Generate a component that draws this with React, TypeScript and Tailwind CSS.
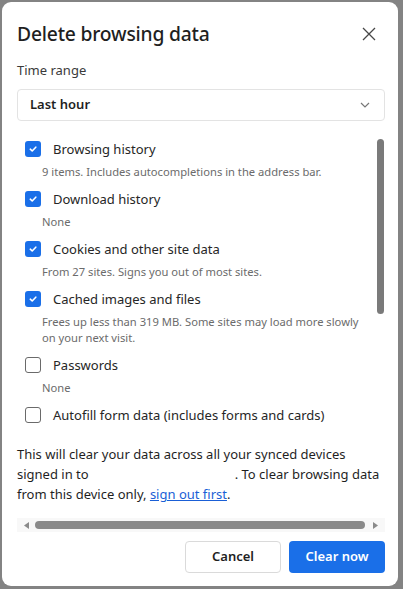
import React from 'react';

type Item = { label: string; desc: string[]; checked: boolean };

const items: Item[] = [
  { label: 'Browsing history', desc: ['9 items. Includes autocompletions in the address bar.'], checked: true },
  { label: 'Download history', desc: ['None'], checked: true },
  { label: 'Cookies and other site data', desc: ['From 27 sites. Signs you out of most sites.'], checked: true },
  {
    label: 'Cached images and files',
    desc: ['Frees up less than 319 MB. Some sites may load more slowly', 'on your next visit.'],
    checked: true,
  },
  { label: 'Passwords', desc: ['None'], checked: false },
  { label: 'Autofill form data (includes forms and cards)', desc: [], checked: false },
];

function Checkbox({ checked }: { checked: boolean }) {
  if (checked) {
    return (
      <div className="w-4 h-4 rounded-[3px] bg-[#1a6fe8] flex items-center justify-center shrink-0">
        <svg width="10" height="10" viewBox="0 0 10 10" fill="none">
          <path d="M2.3 5.2 L4.2 7 L7.8 3.2" stroke="white" strokeWidth="1.6" strokeLinecap="round" strokeLinejoin="round" />
        </svg>
      </div>
    );
  }
  return <div className="w-4 h-4 rounded-[3px] border-[1.5px] border-[#6a6a6a] shrink-0" />;
}

export default function App() {
  return (
    <div className="w-[403px] h-[589px] bg-[#838383] pt-[2px] pl-[2px] overflow-hidden" style={{ fontFamily: '"Noto Sans", sans-serif' }}>
      <div className="w-[396px] h-[584px] bg-white rounded-[9px] pl-[15px] pr-[13px] pt-[20px] flex flex-col text-[#1f1f1f]">
        {/* header */}
        <div className="flex items-center justify-between h-6">
          <h1 className="text-[19.3px] leading-6 font-medium tracking-[-0.2px]">Delete browsing data</h1>
          <button className="mr-[9px] text-[#474747]">
            <svg width="14" height="14" viewBox="0 0 14 14">
              <path d="M1 1 L13 13 M13 1 L1 13" stroke="currentColor" strokeWidth="1.3" />
            </svg>
          </button>
        </div>

        <div className="mt-[14px] text-[13px] leading-5 text-[#3a3a3a]">Time range</div>

        <div className="mt-[9px] h-8 border border-[#e3e3e3] rounded-[4px] flex items-center justify-between pl-[12px] pr-[14px]">
          <span className="text-[13px] font-semibold">Last hour</span>
          <svg width="10" height="6" viewBox="0 0 10 6" fill="none">
            <path d="M1 1 L5 5 L9 1" stroke="#777" strokeWidth="1.2" />
          </svg>
        </div>

        {/* scrollable list */}
        <div className="mt-[8px] h-[303px] flex overflow-hidden">
          <div className="flex-1 pl-[8px] pt-[10px] flex flex-col gap-[9px]">
            {items.map((it) => (
              <div key={it.label}>
                <div className="flex items-center h-5 gap-3">
                  <Checkbox checked={it.checked} />
                  <span className="text-[13px] leading-5 text-[#262626]">{it.label}</span>
                </div>
                {it.desc.length > 0 && (
                  <div className="mt-[5px] pl-[17px] text-[11.2px] leading-4 text-[#6b6b6b]">
                    {it.desc.map((d) => (
                      <div key={d}>{d}</div>
                    ))}
                  </div>
                )}
              </div>
            ))}
          </div>
          <div className="w-[8px] pt-[10px]">
            <div className="w-[7px] h-[175px] rounded-full bg-[#7a7a7a]" />
          </div>
        </div>

        {/* footer note */}
        <p className="mt-[12px] text-[13px] leading-5 text-[#1f1f1f]">
          This will clear your data across all your synced devices signed in to
          <span className="inline-block w-[146px]" />. To clear browsing data from this device only,{' '}
          <a className="text-[#1a5fd6] underline">sign out first</a>.
        </p>

        {/* horizontal scrollbar */}
        <div className="mt-[14px] h-[14px] bg-[#f8f8f8] flex items-center px-[7px] gap-[6px]">
          <svg width="5" height="7" viewBox="0 0 5 7">
            <path d="M5 0 L0 3.5 L5 7 Z" fill="#8a8a8a" />
          </svg>
          <div className="flex-1 h-[8px] rounded-full bg-[#8a8a8a] mr-[2px]" />
          <svg width="5" height="7" viewBox="0 0 5 7">
            <path d="M0 0 L5 3.5 L0 7 Z" fill="#8a8a8a" />
          </svg>
        </div>

        {/* buttons */}
        <div className="mt-[9px] flex justify-end gap-2">
          <button className="w-[96px] h-8 rounded-[4px] border border-[#dadada] text-[13px] font-semibold text-[#1f1f1f]">
            Cancel
          </button>
          <button className="w-[96px] h-8 rounded-[4px] bg-[#1a6fe8] text-[13px] font-semibold text-white">
            Clear now
          </button>
        </div>
      </div>
    </div>
  );
}
